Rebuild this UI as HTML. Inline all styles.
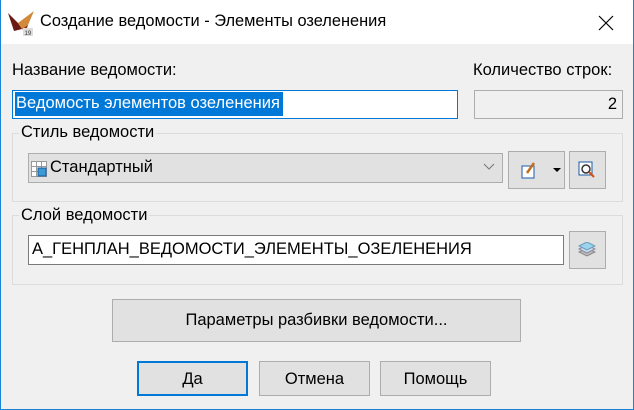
<!DOCTYPE html>
<html><head><meta charset="utf-8"><style>
*{box-sizing:border-box;margin:0;padding:0}
body{width:634px;height:410px;overflow:hidden;background:#f0f0f0;font-family:"Liberation Sans",Arial,sans-serif;font-size:16.5px;color:#000;position:relative}
.a{position:absolute;white-space:nowrap}
.win{position:absolute;left:0;top:0;width:634px;height:410px;border:1px solid #1883d7;border-top:none}
.title{left:0;top:0;width:634px;height:44px;background:#fff}
.btn{position:absolute;background:#e1e1e1;border:1px solid #adadad;text-align:center;white-space:nowrap}
.grp{position:absolute;border:1px solid #dcdcdc}
.lbl{position:absolute;background:#f0f0f0;padding:0 2px;white-space:nowrap}
.inp{position:absolute;background:#fff;border:1px solid #7a7a7a;white-space:nowrap}
</style></head><body>
<div class="a title"></div>
<svg class="a" style="left:6px;top:9px" width="30" height="28" viewBox="0 0 30 28">
<polygon points="2,4 12,14 16,20 8,22" fill="#6a1a12"/>
<polygon points="12,14 28,2 22,16 16,20" fill="#d08a3a"/>
<polygon points="16,20 22,16 20,22" fill="#8a3018"/>
<rect x="17" y="19" width="10" height="8" fill="#ddd"/>
<text x="18.5" y="26" font-size="6" font-family="Liberation Sans" fill="#333">19</text>
</svg>
<div class="a" style="left:40px;top:12px;font-size:16.4px">Создание ведомости - Элементы озеленения</div>
<svg class="a" style="left:598px;top:15px" width="16" height="16"><path d="M1 1L15 15M15 1L1 15" stroke="#000" stroke-width="1.2"/></svg>

<div class="a" style="left:12px;top:61px">Название ведомости:</div>
<div class="a" style="left:473px;top:61px">Количество строк:</div>
<div class="inp" style="left:12px;top:90px;width:446px;height:29px;border-color:#0078d7"></div>
<div class="a" style="left:15px;top:92px;width:268px;height:24px;background:#0078d7;color:#fff;padding:2px 0 0 1px">Ведомость элементов озеленения</div>
<div class="inp" style="left:474px;top:90px;width:149px;height:29px;background:#f0f0f0;border-color:#adadad;text-align:right;padding:4px 5px 0 0">2</div>

<div class="grp" style="left:12px;top:133px;width:611px;height:69px"></div>
<div class="lbl" style="left:19px;top:123px">Стиль ведомости</div>
<div class="btn" style="left:28px;top:153px;width:475px;height:30px;text-align:left;border-color:#adadad"></div>
<svg class="a" style="left:31px;top:161px" width="16" height="16"><path d="M0.5 0.5h15v15h-15zM5.5 0.5v15M10.5 0.5v15M0.5 5.5h15M0.5 10.5h15" stroke="#999" fill="#fff"/><rect x="7" y="7" width="8" height="8" fill="#3a9ad8" stroke="#1a5a98"/></svg>
<div class="a" style="left:50px;top:158px">Стандартный</div>
<svg class="a" style="left:483px;top:163px" width="12" height="8"><path d="M1 1l5 5 5-5" stroke="#777" fill="none"/></svg>
<div class="btn" style="left:508px;top:151px;width:57px;height:38px"></div>
<svg class="a" style="left:521px;top:161px" width="16" height="18"><rect x="1" y="5" width="12" height="12" fill="#fff" stroke="#1a5aa8"/><path d="M6 12L13 2" stroke="#c07020" stroke-width="2.5"/></svg>
<svg class="a" style="left:553px;top:168px" width="8" height="5"><path d="M0 0h8L4 4z" fill="#000"/></svg>
<div class="btn" style="left:569px;top:151px;width:37px;height:38px"></div>
<svg class="a" style="left:578px;top:161px" width="18" height="18"><rect x="1" y="1" width="13" height="13" fill="#fff" stroke="#1a5aa8"/><circle cx="8" cy="8" r="4" fill="none" stroke="#333" stroke-width="1.5"/><path d="M11 11l5 5" stroke="#d05010" stroke-width="2"/></svg>

<div class="grp" style="left:12px;top:215px;width:611px;height:70px"></div>
<div class="lbl" style="left:19px;top:206px">Слой ведомости</div>
<div class="inp" style="left:28px;top:235px;width:536px;height:30px;padding:4px 0 0 3px">А_ГЕНПЛАН_ВЕДОМОСТИ_ЭЛЕМЕНТЫ_ОЗЕЛЕНЕНИЯ</div>
<div class="btn" style="left:569px;top:231px;width:37px;height:38px"></div>
<svg class="a" style="left:578px;top:242px" width="18" height="16"><path d="M1 10l8-4 8 4-8 4z" fill="#bbb" stroke="#888"/><path d="M1 7l8-4 8 4-8 4z" fill="#cde" stroke="#889"/><path d="M1 4l8-4 8 4-8 4z" fill="#9cd4f0" stroke="#6a9ab8"/></svg>

<div class="btn" style="left:112px;top:299px;width:409px;height:43px;padding-top:11px">Параметры разбивки ведомости...</div>
<div class="btn" style="left:137px;top:361px;width:111px;height:35px;border:2px solid #0078d7;padding-top:7px">Да</div>
<div class="btn" style="left:259px;top:361px;width:111px;height:35px;padding-top:8px">Отмена</div>
<div class="btn" style="left:380px;top:361px;width:111px;height:35px;padding-top:8px">Помощь</div>
<div class="win"></div>
</body></html>
